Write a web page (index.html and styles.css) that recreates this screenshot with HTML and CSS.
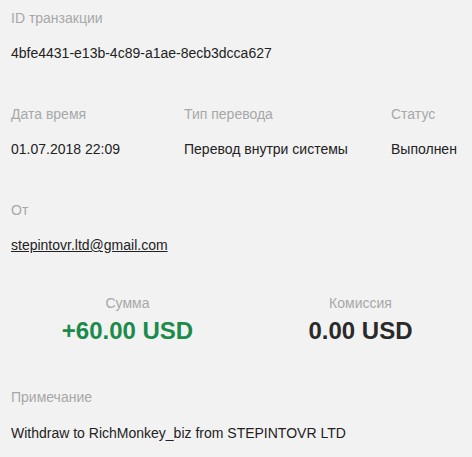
FILE: index.html
```html
<!DOCTYPE html>
<html lang="ru">
<head>
    <meta charset="UTF-8">
    <meta name="viewport" content="width=device-width, initial-scale=1.0">
    <title>Транзакция</title>
    <link rel="stylesheet" href="styles.css">
</head>
<body>
    <div class="transaction">
        <div class="field">
            <div class="label">ID транзакции</div>
            <div class="value">4bfe4431-e13b-4c89-a1ae-8ecb3dcca627</div>
        </div>

        <div class="field row-three">
            <div>
                <div class="label">Дата время</div>
                <div class="value">01.07.2018 22:09</div>
            </div>
            <div>
                <div class="label">Тип перевода</div>
                <div class="value">Перевод внутри системы</div>
            </div>
            <div>
                <div class="label">Статус</div>
                <div class="value">Выполнен</div>
            </div>
        </div>

        <div class="field from">
            <div class="label">От</div>
            <div class="value"><a href="#" class="email">stepintovr.ltd@gmail.com</a></div>
        </div>

        <div class="field amounts">
            <div class="amount-box">
                <div class="label">Сумма</div>
                <div class="amount plus">+60.00 USD</div>
            </div>
            <div class="amount-box">
                <div class="label">Комиссия</div>
                <div class="amount">0.00 USD</div>
            </div>
        </div>

        <div class="field note">
            <div class="label">Примечание</div>
            <div class="value">Withdraw to RichMonkey_biz from STEPINTOVR LTD</div>
        </div>
    </div>
</body>
</html>
```

FILE: styles.css
```css
body {
    margin: 0;
    font-family: "Liberation Sans", Arial, sans-serif;
    font-size: 14px;
    line-height: 20px;
    color: #222;
    background-color: #f2f2f2;
}

.transaction {
    padding: 8px 11px 0 11px;
}

.field {
    margin-bottom: 41px;
}

.label {
    color: #a8a8a8;
    margin-bottom: 15px;
}

.row-three {
    display: grid;
    grid-template-columns: 173px 207px auto;
}

.from {
    margin-bottom: 38px;
}

.email {
    color: #222;
    text-decoration: underline;
}

/* суммы по центру двух колонок */
.amounts {
    display: grid;
    grid-template-columns: 233px 217px;
    margin-bottom: 42px;
}

.amount-box {
    text-align: center;
}

.amount-box:last-child {
    margin-right: -16px;
}

.amount-box .label {
    margin-bottom: 4px;
}

.amount {
    font-size: 24px;
    line-height: 28px;
    font-weight: bold;
    color: #2a2a2a;
}

.amount.plus {
    color: #1b8a4b;
}

.note {
    margin-bottom: 0;
}

.note .label {
    margin-bottom: 16px;
}
```
